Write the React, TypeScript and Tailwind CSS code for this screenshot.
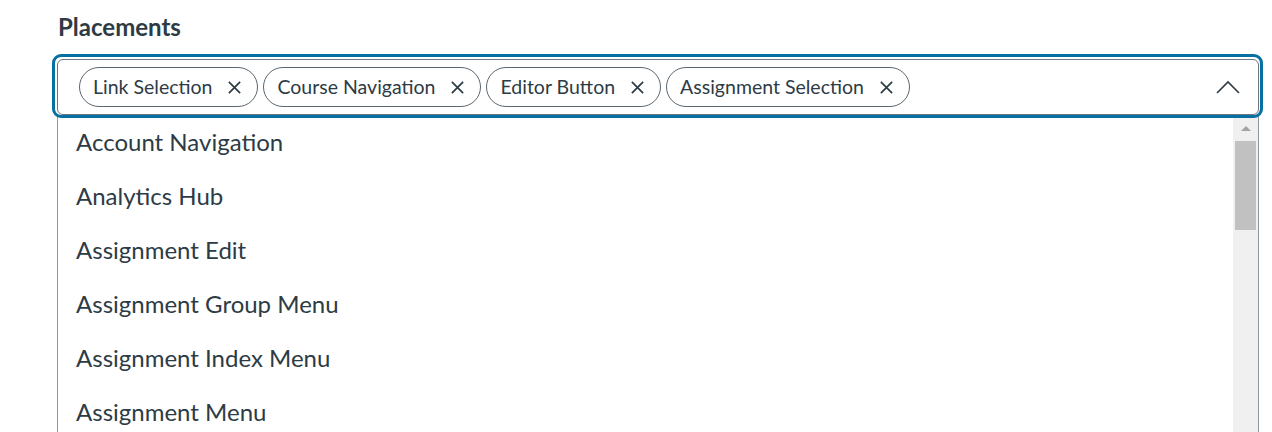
import React from "react";

const chips = ["Link Selection", "Course Navigation", "Editor Button", "Assignment Selection"];
const items = [
  "Account Navigation",
  "Analytics Hub",
  "Assignment Edit",
  "Assignment Group Menu",
  "Assignment Index Menu",
  "Assignment Menu",
];

function X() {
  return (
    <svg width="15" height="15" viewBox="0 0 16 16" className="shrink-0">
      <path d="M2 2 L14 14 M14 2 L2 14" stroke="#2d3b45" strokeWidth="1.8" fill="none" />
    </svg>
  );
}

export default function App() {
  return (
    <div className="w-[1272px] h-[432px] overflow-hidden bg-white text-[#2d3b45]" style={{ fontFamily: "Lato, 'Noto Sans', sans-serif" }}>
      <div className="pl-[57px] pt-[12px] w-[1259px]">
        <div className="text-[24px] font-bold leading-[30px] ml-[1px]">Placements</div>
        <div className="relative mt-[17px]">
          <div className="absolute -left-[5px] -right-[4px] -top-[5px] h-[64px] border-[3px] border-[#0770a3] rounded-[9px] pointer-events-none"></div>
          <div className="relative h-[56px] border border-[#6b7780] rounded-[6px] flex items-center pl-[21px] pr-[18px] bg-white">
            <div className="flex items-center gap-[5px] flex-1">
              {chips.map((c) => (
                <div key={c} className="h-[40px] flex items-center gap-[15px] border border-[#5a6670] rounded-full pl-[13px] pr-[15px] text-[19.5px]">
                  <span>{c}</span>
                  <X />
                </div>
              ))}
            </div>
            <svg width="24" height="14" viewBox="0 0 24 14">
              <path d="M1 13 L12 2 L23 13" stroke="#2d3b45" strokeWidth="1.6" fill="none" />
            </svg>
          </div>
          <div className="flex border-x border-[#8a96a0] h-[320px] bg-white">
            <div className="flex-1 flex flex-col">
              {items.map((t) => (
                <div key={t} className="h-[54px] shrink-0 flex items-center pl-[18px] text-[24px]">
                  {t}
                </div>
              ))}
            </div>
            <div className="w-[25px] bg-[#f0f0f0] flex flex-col items-center">
              <div className="h-[26px] flex items-center justify-center">
                <div className="w-0 h-0 border-l-[5px] border-r-[5px] border-b-[5px] border-l-transparent border-r-transparent border-b-[#a3a3a3]"></div>
              </div>
              <div className="w-[21px] h-[89px] bg-[#c1c1c1]"></div>
            </div>
          </div>
        </div>
      </div>
    </div>
  );
}
